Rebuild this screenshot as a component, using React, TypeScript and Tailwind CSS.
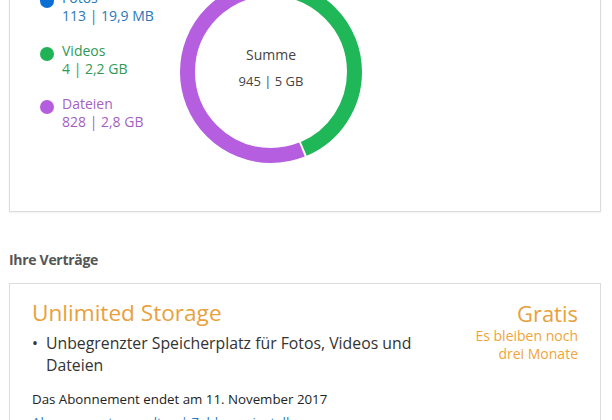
import React from "react";

const legend = [
  { label: "Fotos", value: "113 | 19,9 MB", dot: "bg-[#0b6fd6]", text: "text-[#2a78b8]" },
  { label: "Videos", value: "4 | 2,2 GB", dot: "bg-[#1fb356]", text: "text-[#2e9a55]" },
  { label: "Dateien", value: "828 | 2,8 GB", dot: "bg-[#b45ddf]", text: "text-[#a45fc4]" }
];

const Donut: React.FC = () => {
  const r = 83.5;
  const c = 2 * Math.PI * r;
  const green = c * 0.435;
  const gap = 2;
  const purple = c - green - gap * 2;
  return (
    <div className="relative w-[182px] h-[182px] shrink-0">
      <svg width="182" height="182" viewBox="0 0 182 182" className="-rotate-90">
        <circle cx="91" cy="91" r={r} fill="none" stroke="#1fb757" strokeWidth="15" strokeDasharray={`${green} ${c}`} />
        <circle
          cx="91"
          cy="91"
          r={r}
          fill="none"
          stroke="#b65ee0"
          strokeWidth="15"
          strokeDasharray={`${purple} ${c}`}
          strokeDashoffset={-(green + gap)}
        />
      </svg>
      <div className="absolute inset-0 flex flex-col items-center justify-center">
        <span className="text-[14px] text-[#444] mt-[-8px]">Summe</span>
        <span className="text-[13px] text-[#444] mt-[7px]">945 | 5 GB</span>
      </div>
    </div>
  );
};

const App: React.FC = () => {
  return (
    <div className="w-[612px] h-[420px] overflow-hidden bg-white" style={{ fontFamily: "'Open Sans', 'Noto Sans', sans-serif" }}>
      <div className="mt-[-20px] ml-[9px] w-[592px] h-[232px] border border-[#dcdcdc] shadow-[0_1px_2px_rgba(0,0,0,0.06)] flex">
        <div className="w-[170px] pl-[30px] pt-[8px] flex flex-col gap-[17px]">
          {legend.map((item) => (
            <div key={item.label} className="flex items-start gap-[8px]">
              <span className={`w-[14px] h-[14px] rounded-full mt-[5px] shrink-0 ${item.dot}`} />
              <div className={`flex flex-col text-[14px] leading-[18px] ${item.text}`}>
                <span>{item.label}</span>
                <span>{item.value}</span>
              </div>
            </div>
          ))}
        </div>
        <Donut />
      </div>

      <h2 className="mt-[37px] ml-[9px] text-[14px] font-bold text-[#555] tracking-[-0.3px]">Ihre Verträge</h2>

      <div className="mt-[13px] ml-[9px] w-[592px] border border-[#dcdcdc] px-[22px] pt-[16px] pb-[10px]">
        <div className="flex justify-between">
          <div>
            <h3 className="text-[22.6px] leading-[26px] text-[#e8a13c]">Unlimited Storage</h3>
            <div className="flex mt-[6px] text-[15.8px] leading-[22px] text-[#333]">
              <span className="w-[14px] shrink-0">•</span>
              <span className="w-[380px]">Unbegrenzter Speicherplatz für Fotos, Videos und Dateien</span>
            </div>
          </div>
          <div className="flex flex-col items-end text-right">
            <span className="text-[22px] leading-[26px] text-[#e8a13c]">Gratis</span>
            <span className="text-[14px] leading-[18px] text-[#f0a43a] mt-[1px]">Es bleiben noch</span>
            <span className="text-[14px] leading-[18px] text-[#f0a43a]">drei Monate</span>
          </div>
        </div>
        <p className="mt-[14px] text-[13.3px] leading-[18px] text-[#222]">Das Abonnement endet am 11. November 2017</p>
        <p className="mt-[5px] text-[13.3px] leading-[18px] text-[#2a78b8]">Abonnement verwalten | Zahlung einstellen</p>
      </div>
    </div>
  );
};

export default App;
